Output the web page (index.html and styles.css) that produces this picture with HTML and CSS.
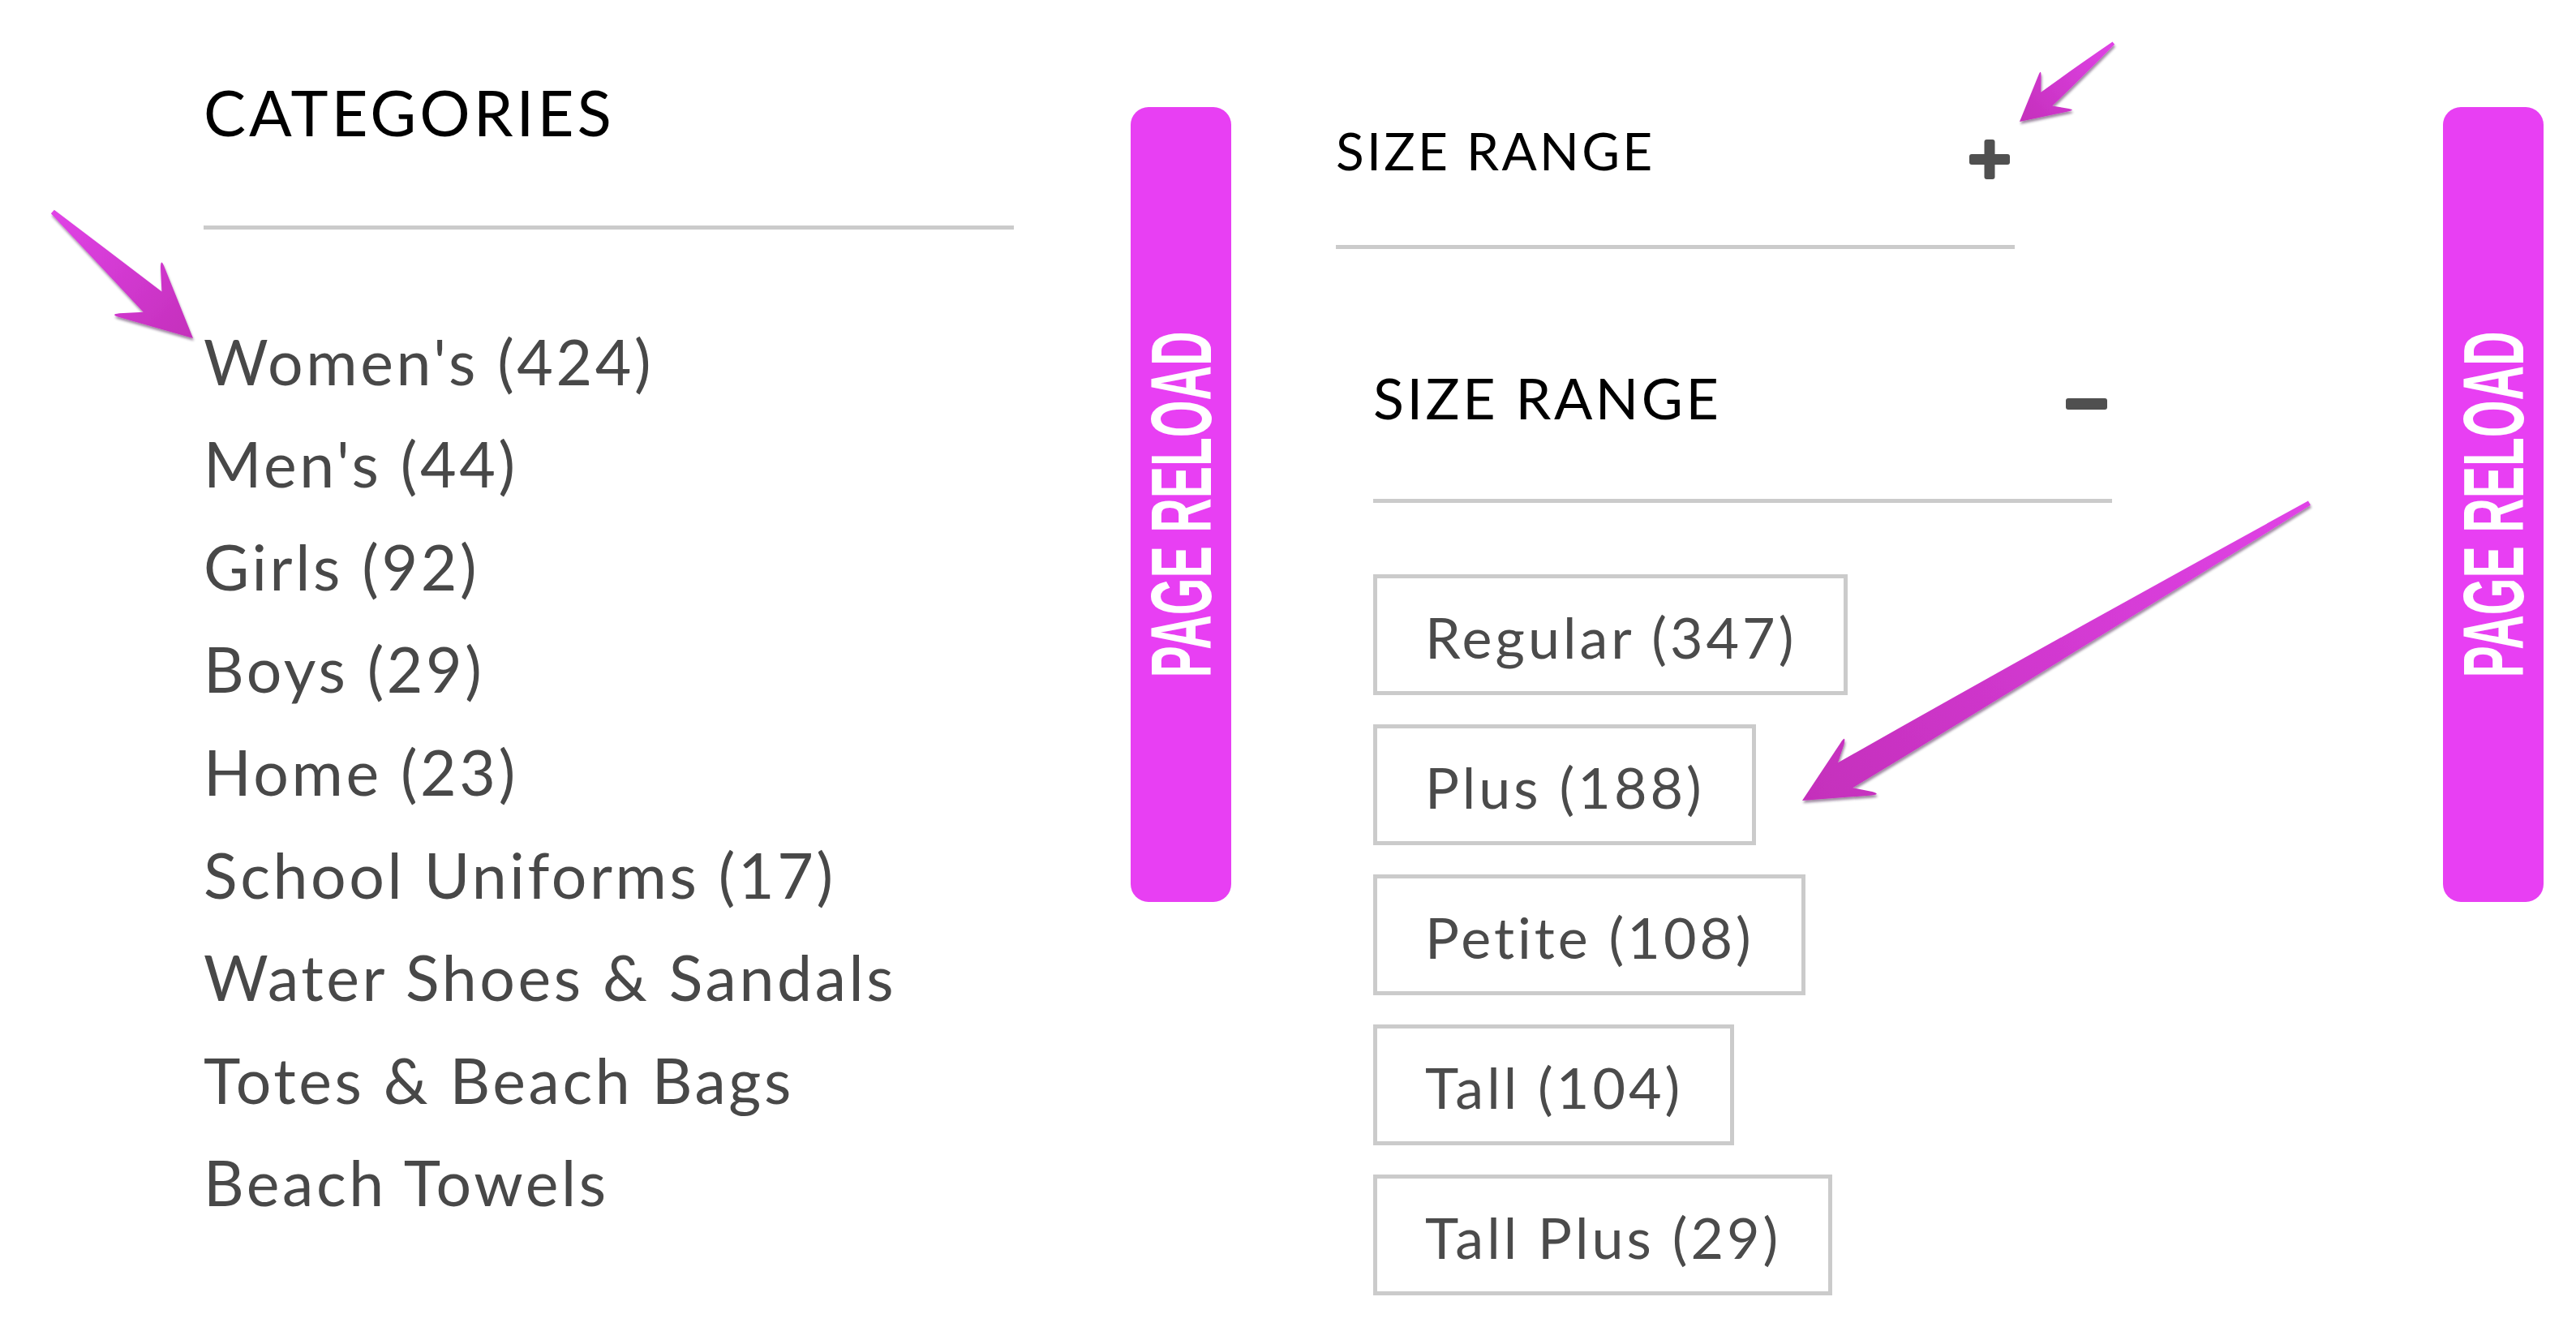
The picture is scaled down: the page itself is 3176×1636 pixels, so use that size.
FILE: index.html
```html
<!DOCTYPE html>
<html lang="en">
<head>
<meta charset="utf-8">
<title>Filters</title>
<link rel="stylesheet" href="styles.css">
</head>
<body>
<div class="page">
  <div class="filters">
    <section class="categories">
      <h2 class="cat-title">CATEGORIES</h2>
      <ul class="cat-list">
        <li>Women's (424)</li>
        <li>Men's (44)</li>
        <li>Girls (92)</li>
        <li>Boys (29)</li>
        <li>Home (23)</li>
        <li>School Uniforms (17)</li>
        <li>Water Shoes &amp; Sandals</li>
        <li>Totes &amp; Beach Bags</li>
        <li>Beach Towels</li>
      </ul>
    </section>

    <div class="reload reload-left"><span>PAGE RELOAD</span></div>

    <section class="size">
      <div class="size-block size-collapsed">
        <div class="size-head">
          <h3>SIZE RANGE</h3>
          <svg class="icon-plus" width="50" height="49" viewBox="0 0 50 49"><rect x="0" y="18" width="50" height="13" rx="3"/><rect x="18.5" y="0" width="13" height="49" rx="3"/></svg>
        </div>
      </div>
      <div class="size-block size-expanded">
        <div class="size-head">
          <h3>SIZE RANGE</h3>
          <svg class="icon-minus" width="51" height="14" viewBox="0 0 51 14"><rect x="0" y="0" width="51" height="14" rx="3"/></svg>
        </div>
        <ul class="size-list">
          <li>Regular (347)</li>
          <li>Plus (188)</li>
          <li>Petite (108)</li>
          <li>Tall (104)</li>
          <li>Tall Plus (29)</li>
        </ul>
      </div>
    </section>

    <div class="reload reload-right"><span>PAGE RELOAD</span></div>
  </div>

  <svg class="arrows" width="3176" height="1636" viewBox="0 0 3176 1636">
    <defs>
      <linearGradient id="ag" x1="0" y1="0" x2="1" y2="0">
        <stop offset="0" stop-color="#e043e6"/>
        <stop offset="1" stop-color="#c42fbb"/>
      </linearGradient>
      <filter id="ash" x="-20%" y="-20%" width="140%" height="140%">
        <feDropShadow dx="1" dy="3" stdDeviation="1.5" flood-color="#2a0030" flood-opacity="0.45"/>
      </filter>
    </defs>
    <g filter="url(#ash)">
      <path fill="url(#ag)" transform="translate(238 417) rotate(42)" d="M-233,-3 Q-150,-10 -67.2,-17 L-88.1,-38 Q-96,-47 -85.2,-41.7 L0,0 L-85.2,41.7 Q-96,47 -88.1,38 L-67.2,17 Q-150,10 -233,3 Z"/>
    </g>
    <g filter="url(#ash)">
      <path fill="url(#ag)" transform="translate(2490 150) rotate(140.1)" d="M-151,-2 Q-100,-7 -43.4,-11 L-57,-26.8 Q-62,-33 -54.9,-29.2 L0,0 L-54.9,29.2 Q-62,33 -57,26.8 L-43.4,11 Q-100,7 -151,2 Z"/>
    </g>
    <g filter="url(#ash)">
      <path fill="url(#ag)" transform="translate(2222 987) rotate(149.6)" d="M-725,-3 Q-380,-13 -61.6,-18 L-79.9,-34.1 Q-88,-43 -77.2,-37.7 L0,0 L-77.2,37.7 Q-88,43 -79.9,34.1 L-61.6,18 Q-380,13 -725,3 Z"/>
    </g>
  </svg>
</div>
</body>
</html>
```

FILE: styles.css
```css
html, body {
  margin: 0;
  padding: 0;
  background: #ffffff;
}

body {
  font-family: Lato, "Open Sans", "Liberation Sans", sans-serif;
}

.page {
  position: relative;
  width: 3176px;
  height: 1636px;
  overflow: hidden;
}

.filters {
  display: flex;
  align-items: flex-start;
  padding-left: 251px;
}

/* ---------- categories ---------- */
.categories {
  width: 999px;
  margin-top: 92px;
  margin-right: 144px;
  flex-shrink: 0;
}

.cat-title {
  margin: 0;
  font-size: 78px;
  line-height: 1.2;
  font-weight: 400;
  color: #000000;
  letter-spacing: 4px;
  padding-bottom: 92px;
  border-bottom: 5px solid #cbcbcb;
}

.cat-list {
  list-style: none;
  margin: 99px 0 0;
  padding: 0;
}

.cat-list li {
  font-size: 77px;
  line-height: 126.6px;
  color: #484848;
  letter-spacing: 3.6px;
  white-space: nowrap;
}

/* ---------- page reload bars ---------- */
.reload {
  width: 124px;
  height: 980px;
  margin-top: 132px;
  flex-shrink: 0;
  background: #e83ff3;
  border-radius: 22px;
  display: flex;
  align-items: center;
  justify-content: center;
}

.reload span {
  flex-shrink: 0;
  white-space: nowrap;
  color: #ffffff;
  font-family: "Liberation Sans", Arial, sans-serif;
  font-weight: 700;
  font-size: 106px;
  line-height: 1;
  transform: rotate(-90deg) scaleX(0.555);
}

.reload-left {
  margin-right: 129px;
}

/* ---------- size range ---------- */
.size {
  width: 956px;
  margin-top: 148px;
  margin-right: 409px;
  flex-shrink: 0;
}

.size-head {
  display: flex;
  align-items: center;
  justify-content: space-between;
  border-bottom: 5px solid #cbcbcb;
}

.size-head h3 {
  margin: 0;
  font-weight: 400;
  line-height: 1.2;
  color: #000000;
  white-space: nowrap;
}

.size-head svg {
  fill: #505050;
  flex-shrink: 0;
}

.size-collapsed {
  width: 837px;
}

.size-collapsed .size-head {
  padding-bottom: 77px;
}

.size-collapsed h3 {
  font-size: 64px;
  letter-spacing: 3.3px;
}

.icon-plus {
  margin-top: 20px;
  margin-right: 6px;
}

.size-expanded {
  width: 911px;
  margin-left: 46px;
  margin-top: 141px;
}

.size-expanded .size-head {
  padding-bottom: 83px;
}

.size-expanded h3 {
  font-size: 70px;
  letter-spacing: 3.5px;
}

.icon-minus {
  margin-top: 16px;
  margin-right: 6px;
}

.size-list {
  list-style: none;
  margin: 88px 0 0;
  padding: 0;
  display: flex;
  flex-direction: column;
  align-items: flex-start;
  gap: 36px;
}

.size-list li {
  border: 5px solid #cbcbcb;
  padding: 30px 58px 25px 59px;
  font-size: 70px;
  line-height: 84px;
  letter-spacing: 4px;
  color: #4b4b4b;
  white-space: nowrap;
}

/* ---------- annotation arrows ---------- */
.arrows {
  position: absolute;
  left: 0;
  top: 0;
  pointer-events: none;
}
```
